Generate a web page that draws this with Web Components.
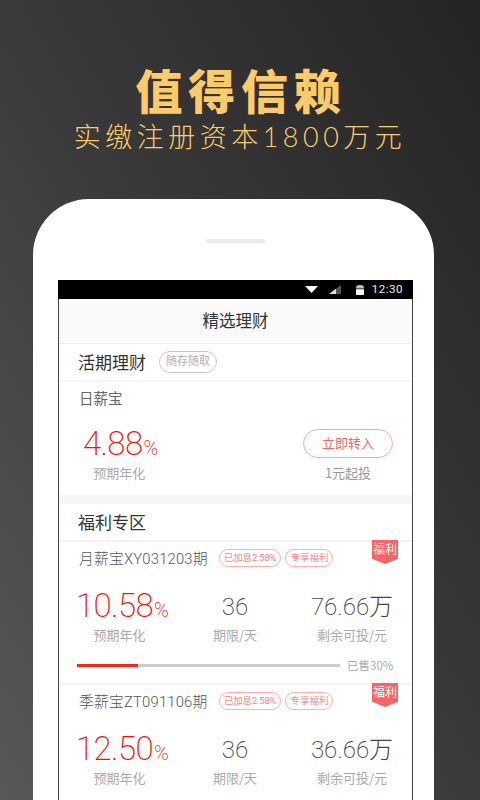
<!DOCTYPE html>
<html lang="zh">
<head>
<meta charset="utf-8">
<title>值得信赖</title>
<style>
html, body {
    margin: 0;
    height: 800px;
    overflow: hidden;
}
body {
    background: linear-gradient(to top right, #585858 0%, #3a3a3a 50%, #252425 100%);
    font-family: "Noto Sans CJK SC", "Noto Sans", sans-serif;
}
</style>
</head>
<body>
<promo-header>
    <span slot="title">值得信赖</span>
    <span slot="sub">实缴注册资本1800万元</span>
</promo-header>
<phone-frame>
    <status-bar></status-bar>
    <nav-title>精选理财</nav-title>
    <section-head label="活期理财"><pill-tag tone="grey">随存随取</pill-tag></section-head>
    <daily-card></daily-card>
    <section-head label="福利专区"></section-head>
    <product-card name="月薪宝XY031203期" rate="10.58" term="36" left="76.66" sold="30"></product-card>
    <product-card name="季薪宝ZT091106期" rate="12.50" term="36" left="36.66"></product-card>
</phone-frame>

<script>
const CJK = '"Noto Sans CJK SC", "Noto Sans", sans-serif';
const NUM = 'Roboto, "Noto Sans CJK SC", sans-serif';

class PromoHeader extends HTMLElement {
    constructor() {
        super();
        this.attachShadow({ mode: 'open' });
        this.shadowRoot.innerHTML = `
            <style>
            :host {
                display: flex;
                flex-direction: column;
                align-items: center;
                height: 199px;
                box-sizing: border-box;
                padding: 58px 4px 0 0;
                color: #fdcb69;
                font-family: ${CJK};
            }
            .title {
                font-size: 47px;
                line-height: 62px;
                font-weight: 900;
                letter-spacing: 5.8px;
                margin-right: -6px;
            }
            .sub {
                font-size: 27px;
                line-height: 34px;
                font-weight: 300;
                letter-spacing: 4.5px;
                margin-right: -4px;
                font-family: Lato, ${CJK};
            }
            </style>
            <div class="title"><slot name="title"></slot></div>
            <div class="sub"><slot name="sub"></slot></div>
        `;
    }
}

class PhoneFrame extends HTMLElement {
    constructor() {
        super();
        this.attachShadow({ mode: 'open' });
        this.shadowRoot.innerHTML = `
            <style>
            :host {
                display: block;
                position: relative;
                width: 401px;
                height: 700px;
                margin-left: 33px;
                background: #fff;
                border-radius: 56px 56px 0 0;
                box-sizing: border-box;
                padding: 81px 21px 0 25px;
            }
            .speaker {
                position: absolute;
                top: 40px;
                left: 173px;
                width: 59px;
                height: 4px;
                border-radius: 2px;
                background: #eaeaea;
            }
            .screen {
                height: 619px;
                border: 1px solid #444;
                border-top: 0;
                background: #fff;
            }
            </style>
            <div class="speaker"></div>
            <div class="screen"><slot></slot></div>
        `;
    }
}

class StatusBar extends HTMLElement {
    constructor() {
        super();
        this.attachShadow({ mode: 'open' });
        this.shadowRoot.innerHTML = `
            <style>
            :host {
                display: flex;
                align-items: center;
                justify-content: flex-end;
                height: 19px;
                margin: 0 -1px;
                padding-right: 10px;
                background: #000;
                color: #eee;
                font: 11.5px/19px Roboto, sans-serif;
                letter-spacing: .5px;
            }
            svg { display: block; }
            .wifi { margin-right: 11px; }
            .signal { margin-right: 14px; }
            .batt { margin-right: 8px; }
            </style>
            <svg class="wifi" width="13" height="7" viewBox="0 0 13 7"><path d="M0 0H13L6.5 7Z" fill="#fff"/></svg>
            <svg class="signal" width="13" height="9" viewBox="0 0 13 9"><path d="M0 9L12 0V9Z" fill="#555"/><path d="M0 9L7 3.8V9Z" fill="#ddd"/></svg>
            <svg class="batt" width="8" height="10" viewBox="0 0 8 10"><path d="M0 3.2Q0 0 3 0H5Q8 0 8 3.2V3.6H0Z" fill="#bbb"/><path d="M0 4.2H8V9Q8 10 7 10H1Q0 10 0 9Z" fill="#fff"/></svg>
            <span>12:30</span>
        `;
    }
}

class NavTitle extends HTMLElement {
    constructor() {
        super();
        this.attachShadow({ mode: 'open' });
        this.shadowRoot.innerHTML = `
            <style>
            :host {
                display: block;
                height: 44px;
                line-height: 43px;
                text-align: center;
                background: #fafafa;
                border-bottom: 1px solid #eee;
                color: #333;
                font-size: 16.5px;
                font-family: ${CJK};
            }
            </style>
            <slot></slot>
        `;
    }
}

class SectionHead extends HTMLElement {
    constructor() {
        super();
        this.attachShadow({ mode: 'open' });
        this.shadowRoot.innerHTML = `
            <style>
            :host {
                display: flex;
                align-items: center;
                gap: 13px;
                height: 36px;
                padding-left: 19px;
                color: #333;
                font-size: 17px;
                font-family: ${CJK};
            }
            #label { margin-top: -2px; }
            </style>
            <span id="label"></span>
            <slot></slot>
        `;
        this.shadowRoot.getElementById('label').textContent = this.getAttribute('label');
    }
}

class PillTag extends HTMLElement {
    constructor() {
        super();
        this.attachShadow({ mode: 'open' });
        const grey = this.getAttribute('tone') === 'grey';
        this.shadowRoot.innerHTML = `
            <style>
            :host {
                display: inline-block;
                box-sizing: border-box;
                height: ${grey ? 22 : 18}px;
                line-height: ${grey ? 20 : 16}px;
                padding: 0 ${grey ? 6 : 4}px;
                border: 1px solid ${grey ? '#c8c8c8' : '#fbb0ae'};
                border-radius: 11px;
                color: ${grey ? '#b0b0b0' : '#f98583'};
                font-size: ${grey ? 11 : 9.5}px;
                white-space: nowrap;
                font-family: Roboto, ${CJK};
            }
            </style>
            <slot></slot>
        `;
    }
}

class RibbonBadge extends HTMLElement {
    constructor() {
        super();
        this.attachShadow({ mode: 'open' });
        this.shadowRoot.innerHTML = `
            <style>
            :host {
                position: absolute;
                top: -2px;
                right: 14px;
                width: 26px;
                height: 24px;
                background: #fa6464;
                clip-path: polygon(0 0, 100% 0, 100% 78%, 50% 100%, 0 78%);
                color: #fff;
                font-size: 12px;
                line-height: 18px;
                text-align: center;
                white-space: nowrap;
                font-family: ${CJK};
            }
            </style>
            <slot></slot>
        `;
    }
}

class RateValue extends HTMLElement {
    constructor() {
        super();
        this.attachShadow({ mode: 'open' });
        this.shadowRoot.innerHTML = `
            <style>
            :host {
                display: block;
                height: 36px;
                line-height: 37px;
                color: #ec1408;
                font-family: ${NUM};
                font-weight: 200;
                font-size: 33px;
                letter-spacing: -.6px;
                white-space: nowrap;
            }
            small { font-size: 20px; letter-spacing: 0; margin-left: 1px; }
            </style>
            <span id="v"></span><small>%</small>
        `;
        this.shadowRoot.getElementById('v').textContent = this.getAttribute('value');
    }
}

class DailyCard extends HTMLElement {
    constructor() {
        super();
        this.attachShadow({ mode: 'open' });
        this.shadowRoot.innerHTML = `
            <style>
            :host {
                display: block;
                border-top: 2px solid #f5f5f5;
                border-bottom: 9px solid #f5f5f5;
                font-family: ${CJK};
            }
            .name {
                height: 34px;
                line-height: 32px;
                padding-left: 20px;
                color: #666;
                font-size: 14.5px;
            }
            .row {
                display: flex;
                justify-content: space-between;
                padding: 9px 19px 13px 24px;
            }
            .col { display: flex; flex-direction: column; align-items: center; }
            .label { margin: 3px 3px 0 0; line-height: 18px; font-size: 13px; color: #aaa; }
            .right .label { color: #999; margin: 6px 0 0; }
            .btn {
                box-sizing: border-box;
                width: 90px;
                height: 29px;
                margin-top: 4px;
                line-height: 26px;
                text-align: center;
                border: 1px solid #f8a9a3;
                border-radius: 15px;
                color: #f0695f;
                font-size: 13px;
            }
            </style>
            <div class="name">日薪宝</div>
            <div class="row">
                <div class="col">
                    <rate-value value="4.88"></rate-value>
                    <div class="label">预期年化</div>
                </div>
                <div class="col right">
                    <div class="btn">立即转入</div>
                    <div class="label">1元起投</div>
                </div>
            </div>
        `;
    }
}

class ProductCard extends HTMLElement {
    constructor() {
        super();
        this.attachShadow({ mode: 'open' });
        const sold = this.getAttribute('sold');
        const progress = sold ? `
            <div class="progress">
                <div class="bar"><div class="fill" style="width:${sold * 2.03}px"></div></div>
                <span>已售${sold}%</span>
            </div>` : '';
        this.shadowRoot.innerHTML = `
            <style>
            :host {
                display: block;
                position: relative;
                border-top: 2px solid #f3f3f3;
                font-family: ${CJK};
            }
            .head {
                display: flex;
                align-items: center;
                height: 29px;
                padding-left: 20px;
                padding-top: 1px;
                color: #666;
                font-size: 14.8px;
                gap: 4px;
            }
            .head .name { width: 136px; white-space: nowrap; font-family: Roboto, ${CJK}; font-weight: 300; color: #555; letter-spacing: .2px; }
            .metrics {
                display: grid;
                grid-template-columns: 90px 138px 96px;
                padding: 15px 0 0 17px;
                text-align: center;
            }
            .big {
                height: 36px;
                line-height: 41px;
                color: #444;
                font-family: ${NUM};
                font-weight: 200;
                font-size: 24px;
                white-space: nowrap;
            }
            .label { margin-top: 3px; line-height: 18px; font-size: 13px; color: #aaa; white-space: nowrap; }
            .rate-label { margin-right: 3px; }
            .progress {
                display: flex;
                align-items: center;
                gap: 7px;
                height: 18px;
                margin: 12px 0 9px;
                padding-left: 18px;
                color: #aaa;
                font-size: 11.5px;
            }
            .bar { width: 263px; height: 3px; background: #ccc; }
            .fill { height: 3px; background: #f0291e; }
            </style>
            <ribbon-badge>福利</ribbon-badge>
            <div class="head">
                <span class="name" id="name"></span>
                <pill-tag style="letter-spacing:-.2px">已加息2.58%</pill-tag>
                <pill-tag>专享福利</pill-tag>
            </div>
            <div class="metrics">
                <div>
                    <rate-value id="rate"></rate-value>
                    <div class="label rate-label">预期年化</div>
                </div>
                <div>
                    <div class="big" id="term"></div>
                    <div class="label">期限/天</div>
                </div>
                <div>
                    <div class="big"><span id="left"></span>万</div>
                    <div class="label">剩余可投/元</div>
                </div>
            </div>
            ${progress}
        `;
        const root = this.shadowRoot;
        root.getElementById('name').textContent = this.getAttribute('name');
        root.getElementById('term').textContent = this.getAttribute('term');
        root.getElementById('left').textContent = this.getAttribute('left');
        root.getElementById('rate').shadowRoot.getElementById('v').textContent = this.getAttribute('rate');
    }
}

customElements.define('rate-value', RateValue);
customElements.define('pill-tag', PillTag);
customElements.define('ribbon-badge', RibbonBadge);
customElements.define('promo-header', PromoHeader);
customElements.define('phone-frame', PhoneFrame);
customElements.define('status-bar', StatusBar);
customElements.define('nav-title', NavTitle);
customElements.define('section-head', SectionHead);
customElements.define('daily-card', DailyCard);
customElements.define('product-card', ProductCard);
</script>
</body>
</html>
